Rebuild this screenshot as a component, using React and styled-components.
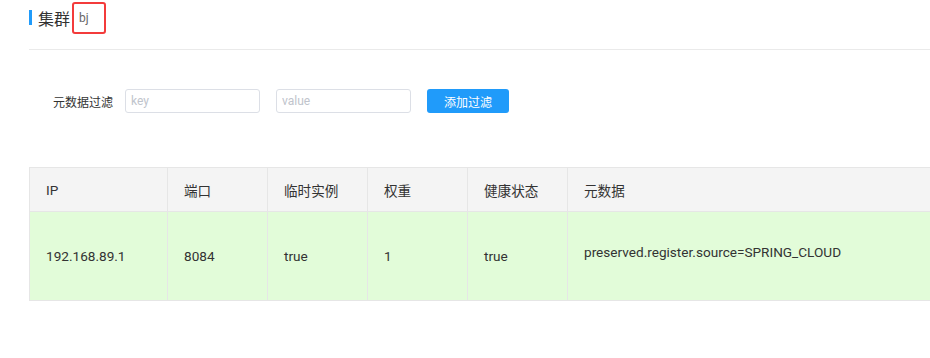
import React from 'react';
import styled, { createGlobalStyle } from 'styled-components';

const GlobalStyle = createGlobalStyle`
  html, body {
    margin: 0;
    padding: 0;
    background: #fff;
    overflow: hidden;
  }
  body {
    font-family: Roboto, "Noto Sans CJK SC", sans-serif;
    color: #333;
  }
`;

const COLUMNS = [
  { key: 'ip', title: 'IP', width: 138 },
  { key: 'port', title: '端口', width: 100 },
  { key: 'ephemeral', title: '临时实例', width: 100 },
  { key: 'weight', title: '权重', width: 100 },
  { key: 'healthy', title: '健康状态', width: 100 },
  { key: 'metadata', title: '元数据', width: 400 },
];

const ROWS = [
  {
    ip: '192.168.89.1',
    port: '8084',
    ephemeral: 'true',
    weight: '1',
    healthy: 'true',
    metadata: 'preserved.register.source=SPRING_CLOUD',
  },
];

const App = () => (
  <Page>
    <GlobalStyle />
    <TitleBar>
      <TitleMark />
      <Title>集群</Title>
      <ClusterName>bj</ClusterName>
    </TitleBar>
    <FilterRow>
      <FilterLabel>元数据过滤</FilterLabel>
      <FilterInput placeholder="key" />
      <FilterInput placeholder="value" />
      <PrimaryButton>添加过滤</PrimaryButton>
    </FilterRow>
    <Table>
      <colgroup>
        {COLUMNS.map((col) => (
          <col key={col.key} style={{ width: col.width }} />
        ))}
      </colgroup>
      <thead>
        <tr>
          {COLUMNS.map((col) => (
            <HeadCell key={col.key}>{col.title}</HeadCell>
          ))}
        </tr>
      </thead>
      <tbody>
        {ROWS.map((row) => (
          <BodyRow key={row.ip + row.port}>
            {COLUMNS.map((col) => (
              <BodyCell key={col.key}>
                {col.key === 'metadata' ? <MetaLine>{row[col.key]}</MetaLine> : row[col.key]}
              </BodyCell>
            ))}
          </BodyRow>
        ))}
      </tbody>
    </Table>
  </Page>
);

export default App;

const Page = styled.div`
  padding-left: 29px;
  width: 960px;
`;

const TitleBar = styled.div`
  display: flex;
  align-items: center;
  height: 50px;
  border-bottom: 1px solid #eaeaea;
  padding-top: 2px;
  box-sizing: border-box;
`;

const TitleMark = styled.span`
  width: 3px;
  height: 15px;
  background: #209bfa;
  margin-right: 6px;
  margin-top: -16px;
`;

const Title = styled.span`
  font-size: 16px;
  color: #333;
  margin-top: -16px;
`;

const ClusterName = styled.span`
  display: inline-flex;
  align-items: center;
  box-sizing: border-box;
  width: 34px;
  height: 32px;
  margin-left: 2px;
  margin-top: -15px;
  padding-left: 5px;
  border: 2px solid #f33b3b;
  border-radius: 3px;
  font-size: 12px;
  color: #666;
`;

const FilterRow = styled.div`
  display: flex;
  align-items: center;
  margin-top: 39px;
  padding-left: 24px;
  height: 24px;
`;

const FilterLabel = styled.span`
  font-size: 12px;
  color: #333;
  margin-right: 12px;
`;

const FilterInput = styled.input`
  box-sizing: border-box;
  width: 135px;
  height: 24px;
  border: 1px solid #dcdfe6;
  border-radius: 3px;
  padding: 0 5px;
  font-family: Roboto, sans-serif;
  font-size: 12px;
  margin-right: 16px;
  outline: none;
  &::placeholder {
    color: #c0c4cc;
  }
`;

const PrimaryButton = styled.button`
  box-sizing: border-box;
  width: 82px;
  height: 24px;
  border: none;
  border-radius: 3px;
  background: #209bfa;
  color: #fff;
  font-family: Roboto, "Noto Sans CJK SC", sans-serif;
  font-size: 12px;
  cursor: pointer;
`;

const Table = styled.table`
  margin-top: 54px;
  border-collapse: collapse;
  table-layout: fixed;
  width: 938px;
  font-size: 13.6px;
`;

const HeadCell = styled.th`
  height: 43px;
  padding: 0 0 0 16px;
  text-align: left;
  font-weight: normal;
  color: #333;
  background: #f4f4f4;
  border: 1px solid #e6e6e6;
`;

const BodyRow = styled.tr`
  background: #e2fcd9;
`;

const BodyCell = styled.td`
  height: 88px;
  padding: 0 0 0 16px;
  color: #333;
  border: 1px solid #e6e6e6;
  vertical-align: middle;
`;

const MetaLine = styled.div`
  margin-bottom: 9px;
`;
